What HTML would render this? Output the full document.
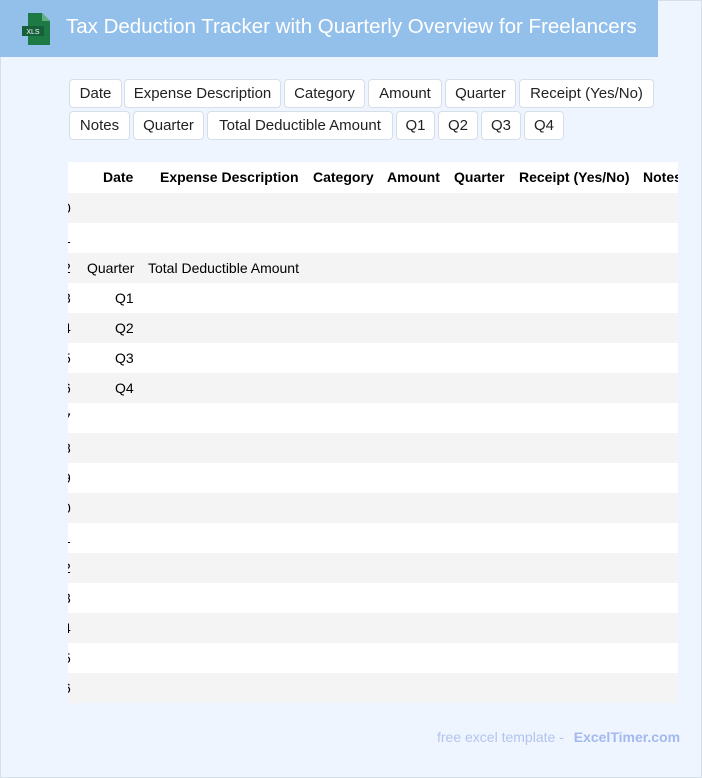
<!DOCTYPE html>
<html><head><style>
*{margin:0;padding:0;box-sizing:border-box}
body{width:702px;height:778px;background:#eef5fe;font-family:"Liberation Sans",Arial,sans-serif;position:relative;overflow:hidden;box-shadow:inset 0 0 0 1px #d6dee8}
.hdr{position:absolute;left:0;top:0;width:658px;height:57px;background:#93c0ea}
.hdr .t{position:absolute;left:66px;top:15px;color:#fff;font-size:20.5px;white-space:nowrap}
.b{position:absolute;height:29px;background:#fff;border:1px solid #d6dee8;border-radius:4px;font-size:15px;color:#222;display:flex;align-items:center;justify-content:center;white-space:nowrap}
.tbl{position:absolute;left:68px;top:162px;width:610px;height:541px;background:#fff;overflow:hidden}
.h{position:absolute;top:0;font-weight:bold;font-size:14px;line-height:31px;color:#000;white-space:nowrap}
.line{position:absolute;left:0;top:31px;width:610px;height:1px;background:#111}
.r{position:absolute;left:0;width:610px;height:30px}
.r span{position:absolute;font-size:14px;line-height:30px;white-space:nowrap;color:#000}
.foot{position:absolute;left:437px;top:729px;font-size:14px;color:#b3c3ef}
.foot b{color:#a4b8f0;margin-left:6px}
</style></head><body>
<div class="hdr">
<svg style="position:absolute;left:22px;top:13px" width="28" height="32" viewBox="0 0 28 32"><path d="M6 0h14l8 8v24H6z" fill="#1e7a45"/><path d="M20 0l8 8h-8z" fill="#5fb07f"/><rect x="0" y="13" width="22" height="10" fill="#15603a"/><text x="11" y="21" font-size="7" fill="#fff" text-anchor="middle" font-family="Liberation Sans">XLS</text></svg>
<div class="t">Tax Deduction Tracker with Quarterly Overview for Freelancers</div>
</div>
<div class="b" style="left:69px;top:79px;width:53px">Date</div>
<div class="b" style="left:124px;top:79px;width:157px">Expense Description</div>
<div class="b" style="left:284px;top:79px;width:81px">Category</div>
<div class="b" style="left:368px;top:79px;width:74px">Amount</div>
<div class="b" style="left:445px;top:79px;width:71px">Quarter</div>
<div class="b" style="left:519px;top:79px;width:135px">Receipt (Yes/No)</div>
<div class="b" style="left:69px;top:111px;width:61px">Notes</div>
<div class="b" style="left:133px;top:111px;width:71px">Quarter</div>
<div class="b" style="left:207px;top:111px;width:186px">Total Deductible Amount</div>
<div class="b" style="left:396px;top:111px;width:39px">Q1</div>
<div class="b" style="left:438px;top:111px;width:40px">Q2</div>
<div class="b" style="left:481px;top:111px;width:40px">Q3</div>
<div class="b" style="left:524px;top:111px;width:40px">Q4</div>
<div class="tbl">
<div class="h" style="left:35px">Date</div>
<div class="h" style="left:92px">Expense Description</div>
<div class="h" style="left:245px">Category</div>
<div class="h" style="left:319px">Amount</div>
<div class="h" style="left:386px">Quarter</div>
<div class="h" style="left:451px">Receipt (Yes/No)</div>
<div class="h" style="left:575px">Notes</div>
<div class="line"></div>
<div class="r" style="top:31px;background:#f4f4f4"><span style="left:-5px">0</span></div>
<div class="r" style="top:61px"><span style="left:-5px">1</span></div>
<div class="r" style="top:91px;background:#f4f4f4"><span style="left:-5px">2</span><span style="left:19px">Quarter</span><span style="left:80px">Total Deductible Amount</span></div>
<div class="r" style="top:121px"><span style="left:-5px">3</span><span style="left:47px">Q1</span></div>
<div class="r" style="top:151px;background:#f4f4f4"><span style="left:-5px">4</span><span style="left:47px">Q2</span></div>
<div class="r" style="top:181px"><span style="left:-5px">5</span><span style="left:47px">Q3</span></div>
<div class="r" style="top:211px;background:#f4f4f4"><span style="left:-5px">6</span><span style="left:47px">Q4</span></div>
<div class="r" style="top:241px"><span style="left:-5px">7</span></div>
<div class="r" style="top:271px;background:#f4f4f4"><span style="left:-5px">8</span></div>
<div class="r" style="top:301px"><span style="left:-5px">9</span></div>
<div class="r" style="top:331px;background:#f4f4f4"><span style="left:-5px">0</span></div>
<div class="r" style="top:361px"><span style="left:-5px">1</span></div>
<div class="r" style="top:391px;background:#f4f4f4"><span style="left:-5px">2</span></div>
<div class="r" style="top:421px"><span style="left:-5px">3</span></div>
<div class="r" style="top:451px;background:#f4f4f4"><span style="left:-5px">4</span></div>
<div class="r" style="top:481px"><span style="left:-5px">5</span></div>
<div class="r" style="top:511px;background:#f4f4f4"><span style="left:-5px">6</span></div>
</div>
<div class="foot">free excel template - <b>ExcelTimer.com</b></div>
</body></html>
